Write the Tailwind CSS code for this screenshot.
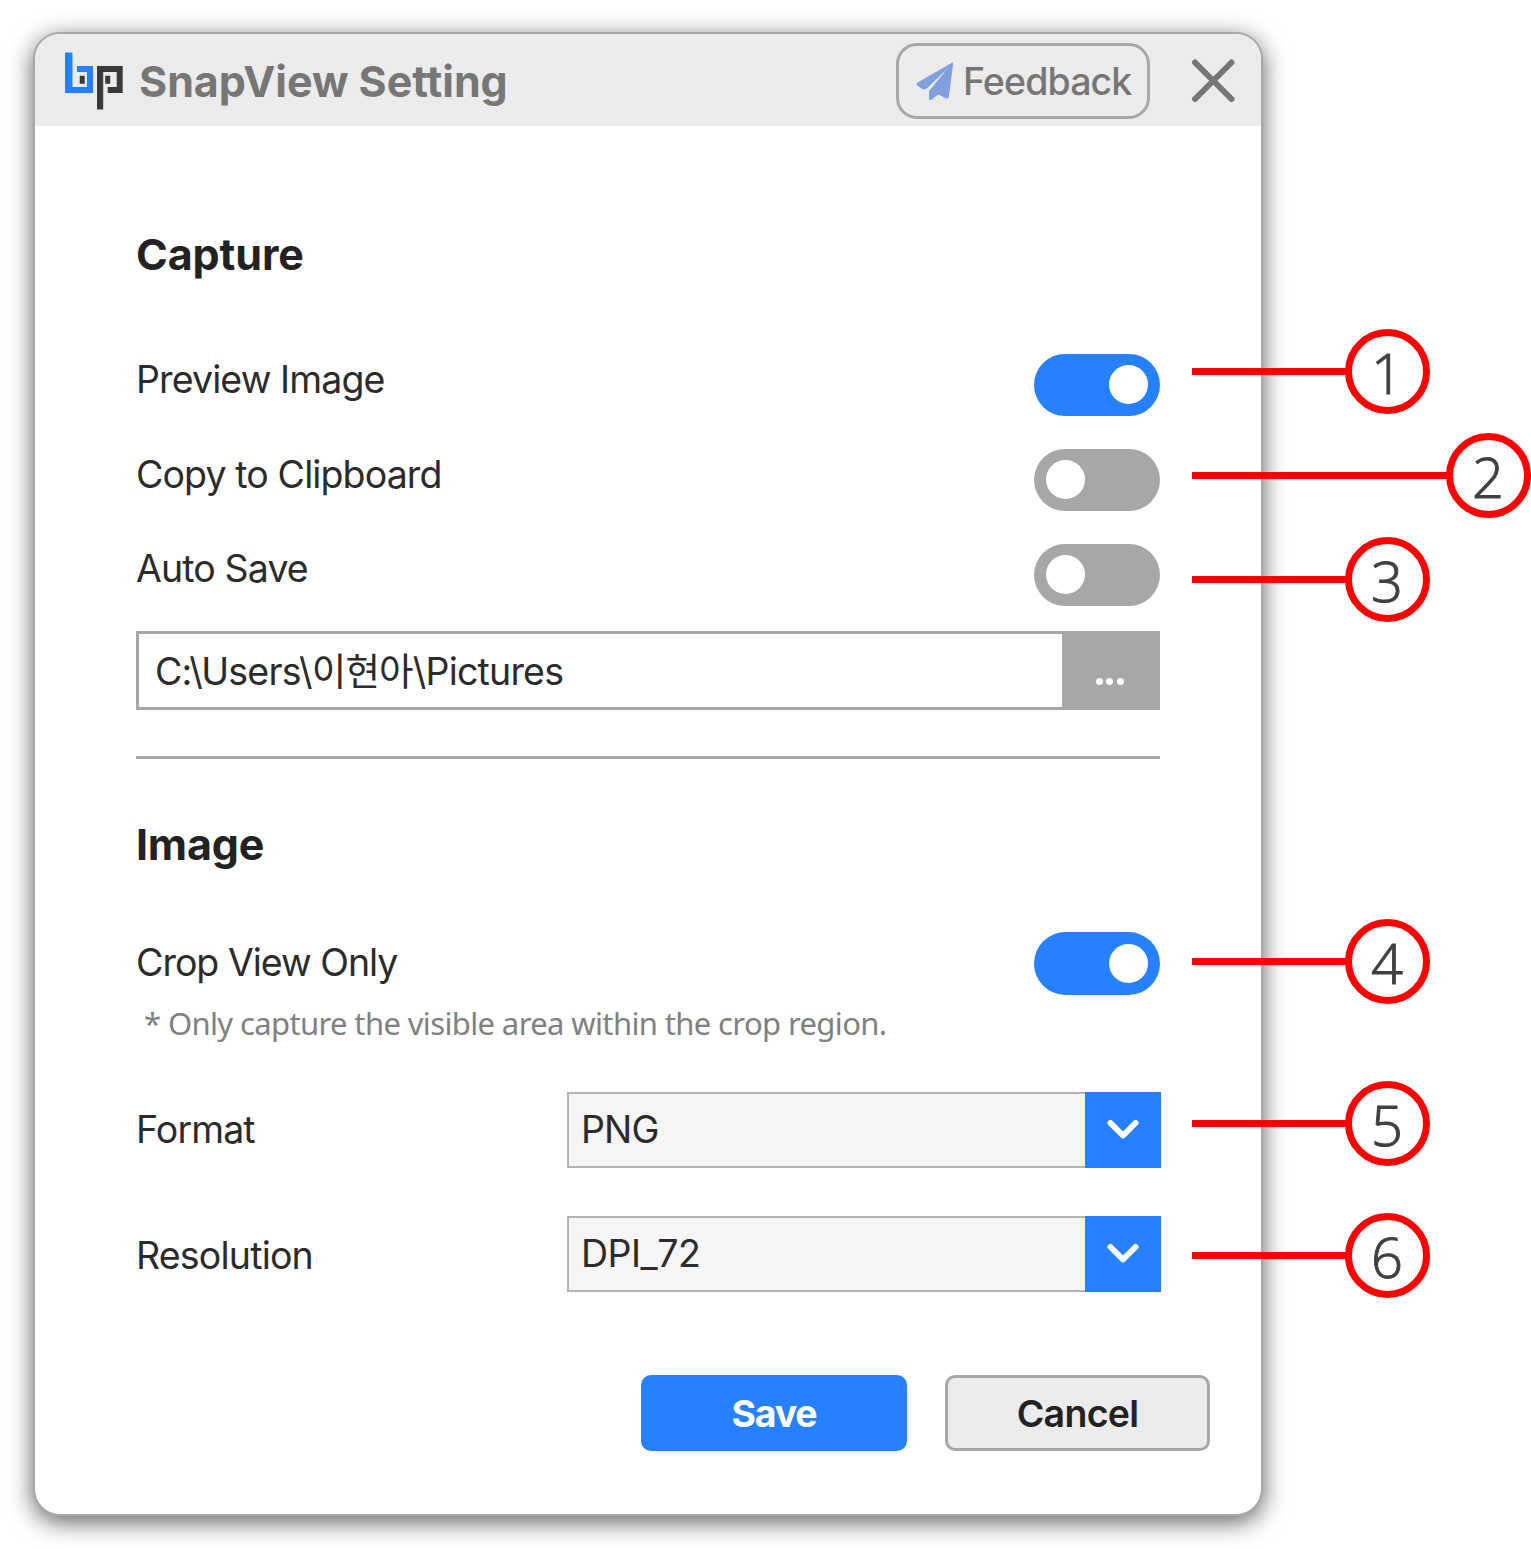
<!DOCTYPE html>
<html lang="en">
<head>
<meta charset="utf-8">
<title>SnapView Setting</title>
<script src="https://cdn.jsdelivr.net/npm/@tailwindcss/browser@4"></script>
</head>
<body class="relative h-[1549px] w-[1531px] overflow-hidden bg-white font-['Inter','Noto_Sans_CJK_KR',sans-serif] text-[37.5px] leading-none tracking-[-0.88px] text-[#2b2b2b]">
<div class="pt-8 pl-[33px]">
<main class="h-[1484px] w-[1230px] overflow-hidden rounded-[27px] border-2 border-[#a7a7a7] bg-white shadow-[0_6px_24px_rgba(0,0,0,0.62)]">
  <header class="flex h-[92px] items-center bg-[#ebebeb] pt-px pl-[30px]">
    <svg class="h-[58px] w-[58px] shrink-0" viewBox="65 52 58 58">
      <path fill="#2680ff" d="M65 52.5h7.5V87H87V72H77v-6h16v27H65z"/>
      <path fill="#3a3a3a" d="M97 66h25.7v27h-15v-6h9V72h-13.5v37.5H97zM79.7 75.7h5v8h-5zM105.2 75.7h5v8h-5z"/>
    </svg>
    <h1 class="ml-4 w-[757px] pt-px text-[43px] font-bold tracking-[-0.030px] whitespace-nowrap text-[#767676]">SnapView Setting</h1>
    <button class="flex h-[76px] w-[254px] shrink-0 items-center rounded-[21px] border-[3px] border-[#a7a7a7] pl-[17px] text-[37.5px] font-medium text-[#767676]">
      <svg class="h-[38px] w-[38px] shrink-0" viewBox="168 186 112 112">
        <g fill="#7f9fdf" stroke="#7f9fdf" stroke-width="3" stroke-linejoin="round">
          <path d="M276 189L171 249v4l19 13 11-5z"/>
          <path d="M276 190L263 291l-5 1-25-12-20 16h-5v-24z"/>
        </g>
      </svg>
      <span class="ml-[9px] pt-[3px]">Feedback</span>
    </button>
    <svg class="mt-px ml-[41px] h-[44px] w-[44px] shrink-0" viewBox="0 0 44 44" fill="none" stroke="#767676" stroke-width="6" stroke-linecap="round"><path d="M4 3.5L40.500 40M40.500 3.500L4 40"/></svg>
  </header>

  <div class="px-[101px] pt-[99px]">
    <section>
      <h2 class="flex h-[60px] items-center pb-0.5 text-[43px] font-bold tracking-[-0.1px] text-[#222]">Capture</h2>
      <div class="mt-[68.500px] flex flex-col gap-[32.500px]">
        <div class="flex h-[62.500px] items-center justify-between">
          <span class="pb-[11px]">Preview Image</span>
          <span class="flex h-[62.500px] w-[126px] items-center justify-end rounded-full bg-[#2680ff] pr-3"><i class="size-[39px] rounded-full bg-white"></i></span>
        </div>
        <div class="flex h-[62.500px] items-center justify-between">
          <span class="pb-[11px]">Copy to Clipboard</span>
          <span class="flex h-[62.500px] w-[126px] items-center rounded-full bg-[#a7a7a7] pl-3"><i class="size-[39px] rounded-full bg-white"></i></span>
        </div>
        <div class="flex h-[62.500px] items-center justify-between">
          <span class="pb-[12px]">Auto Save</span>
          <span class="flex h-[62.500px] w-[126px] items-center rounded-full bg-[#a7a7a7] pl-3"><i class="size-[39px] rounded-full bg-white"></i></span>
        </div>
      </div>
      <div class="mt-[25px] flex h-[79px] border-[3px] border-[#a7a7a7]">
        <span class="flex flex-1 items-center pt-[3px] pl-4 tracking-[-0.8px]">C:\Users\이현아\Pictures</span>
        <button class="flex w-[95px] items-center justify-center gap-[3.500px] bg-[#a7a7a7] pt-[22px]">
          <i class="size-[7px] rounded-full bg-white"></i><i class="size-[7px] rounded-full bg-white"></i><i class="size-[7px] rounded-full bg-white"></i>
        </button>
      </div>
      <hr class="mt-[46px] border-t-[3px] border-[#a7a7a7]">
    </section>

    <section>
      <h2 class="mt-[56px] flex h-[60px] items-center pb-0.5 text-[43px] font-bold tracking-[-0.2px] text-[#222]">Image</h2>
      <div class="mt-[57px] flex h-[63px] items-center justify-between">
        <span class="pb-px tracking-[-1px]">Crop View Only</span>
        <span class="flex h-[62.500px] w-[126px] items-center justify-end rounded-full bg-[#2680ff] pr-3"><i class="size-[39px] rounded-full bg-white"></i></span>
      </div>
      <p class="mt-[8px] flex h-10 items-center pl-2 font-['Noto_Sans',sans-serif] text-[31px] tracking-[-0.63px] whitespace-nowrap text-[#808080]">* Only capture the visible area within the crop region.</p>
      <div class="mt-[49px] -mr-px flex h-[76px] items-center justify-between">
        <span>Format</span>
        <div class="flex h-[76px] w-[594px] justify-between border-2 border-r-0 border-[#b4b4b4] bg-[#f5f5f5]">
          <span class="flex items-center pl-3">PNG</span>
          <span class="-my-0.5 flex w-[76px] items-center justify-center bg-[#2680ff]"><svg class="h-6 w-8" viewBox="0 0 32 24" fill="none" stroke="#fff" stroke-width="6" stroke-linecap="round" stroke-linejoin="round"><path d="M3.500 5L16 17.500 28.500 5"/></svg></span>
        </div>
      </div>
      <div class="mt-[48px] -mr-px flex h-[76px] items-center justify-between">
        <span class="pt-[3px] tracking-[-0.8px]">Resolution</span>
        <div class="flex h-[76px] w-[594px] justify-between border-2 border-r-0 border-[#b4b4b4] bg-[#f5f5f5]">
          <span class="flex items-center pl-3 tracking-[-0.5px]">DPI_72</span>
          <span class="-my-0.5 flex w-[76px] items-center justify-center bg-[#2680ff]"><svg class="h-6 w-8" viewBox="0 0 32 24" fill="none" stroke="#fff" stroke-width="6" stroke-linecap="round" stroke-linejoin="round"><path d="M3.500 5L16 17.500 28.500 5"/></svg></span>
        </div>
      </div>
    </section>

    <footer class="mt-[83px] -mr-[50px] flex justify-end gap-[38px]">
      <button class="h-[76px] w-[266px] rounded-[10px] bg-[#2680ff] pt-0.5 font-bold tracking-[-1.2px] text-white">Save</button>
      <button class="h-[76px] w-[265px] rounded-[10px] border-[3px] border-[#a7a7a7] bg-[#ebebeb] pt-0.5 font-semibold tracking-[-0.7px] text-[#222]">Cancel</button>
    </footer>
  </div>
</main>
</div>

<!-- Numbered callouts laid over the window edge -->
<div class="font-['Open_Sans',sans-serif] text-[56px] font-light tracking-normal text-[#404040] [-webkit-text-stroke:1px_#404040]">
  <div class="absolute top-[329px] left-[1192px] flex items-center"><i class="h-[7px] w-[154px] bg-[#f00]"></i><b class="-ml-px flex size-[85px] items-center justify-center rounded-full border-[7px] border-[#f00] bg-white pr-px font-light">1</b></div>
  <div class="absolute top-[433px] left-[1192px] flex items-center"><i class="h-[7px] w-[255px] bg-[#f00]"></i><b class="-ml-px flex size-[85px] items-center justify-center rounded-full border-[7px] border-[#f00] bg-white pr-px font-light">2</b></div>
  <div class="absolute top-[537px] left-[1192px] flex items-center"><i class="h-[7px] w-[154px] bg-[#f00]"></i><b class="-ml-px flex size-[85px] items-center justify-center rounded-full border-[7px] border-[#f00] bg-white pr-px font-light">3</b></div>
  <div class="absolute top-[919px] left-[1192px] flex items-center"><i class="h-[7px] w-[154px] bg-[#f00]"></i><b class="-ml-px flex size-[85px] items-center justify-center rounded-full border-[7px] border-[#f00] bg-white pr-px font-light">4</b></div>
  <div class="absolute top-[1081px] left-[1192px] flex items-center"><i class="h-[7px] w-[154px] bg-[#f00]"></i><b class="-ml-px flex size-[85px] items-center justify-center rounded-full border-[7px] border-[#f00] bg-white pr-px font-light">5</b></div>
  <div class="absolute top-[1213px] left-[1192px] flex items-center"><i class="h-[7px] w-[154px] bg-[#f00]"></i><b class="-ml-px flex size-[85px] items-center justify-center rounded-full border-[7px] border-[#f00] bg-white pr-px font-light">6</b></div>
</div>
</body>
</html>
